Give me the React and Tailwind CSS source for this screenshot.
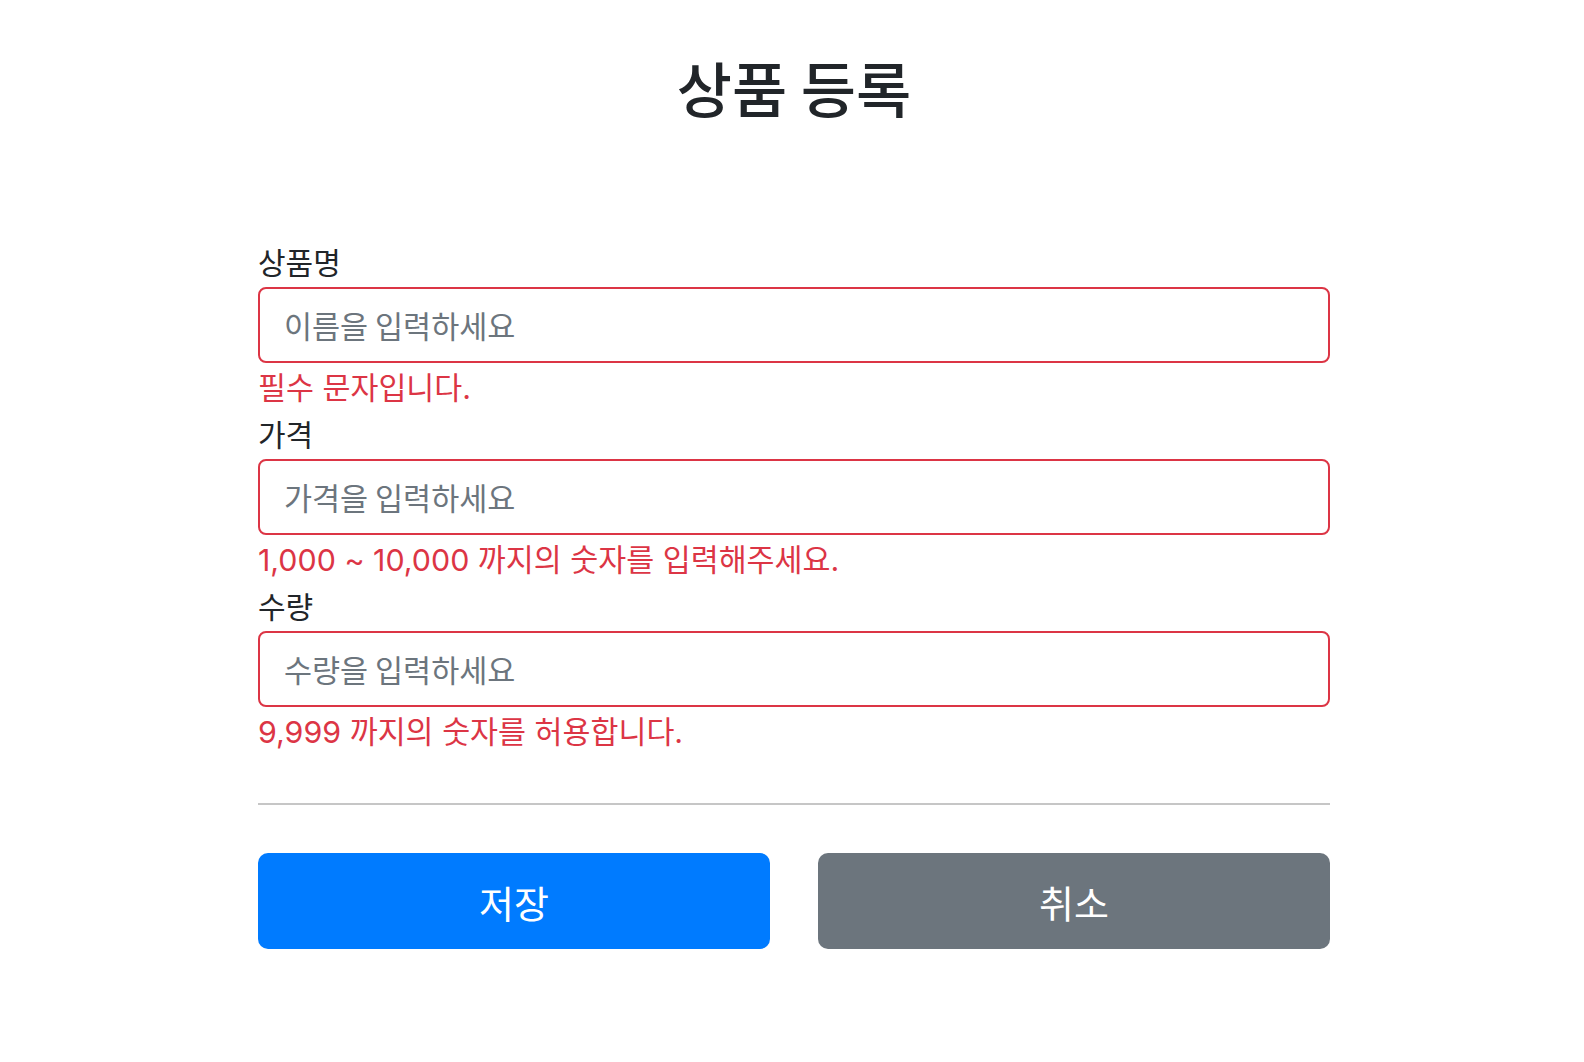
import { useState } from "react"

const fields = [
  { label: "상품명", placeholder: "이름을 입력하세요", error: "필수 문자입니다." },
  { label: "가격", placeholder: "가격을 입력하세요", error: "1,000 ~ 10,000 까지의 숫자를 입력해주세요." },
  { label: "수량", placeholder: "수량을 입력하세요", error: "9,999 까지의 숫자를 허용합니다." },
]

export default function App() {
  const [values, setValues] = useState({})

  return (
    <div className="min-h-screen bg-white pl-[4px] text-[#212529] font-['Noto_Sans_CJK_KR','Noto_Sans',sans-serif]">
      <div className="mx-auto w-[1072px] pt-[48px]">
        <h2 className="text-center text-[60px] leading-[77px] font-medium">상품 등록</h2>

        <form className="mt-[114px]" onSubmit={(e) => e.preventDefault()}>
          {fields.map((f, i) => (
            <div key={f.label}>
              <label className="block text-[30px] leading-[44px] pb-[4px]">{f.label}</label>
              <input
                type="text"
                value={values[i] || ""}
                onChange={(e) => setValues({ ...values, [i]: e.target.value })}
                placeholder={f.placeholder}
                className="block w-full h-[76px] px-[24px] border-2 border-[#dc3545] rounded-[8px] text-[30.5px] text-[#495057] placeholder-[#6c757d] outline-none"
              />
              <div className="mt-[5px] mb-[3px] font-['Inter','Noto_Sans_CJK_KR',sans-serif] text-[30.4px] leading-[40px] text-[#dc3545]">
                {f.error}
              </div>
            </div>
          ))}

          <hr className="mt-[51px] border-t-2 border-[#c6c6c6]" />

          {/* Buttons */}
          <div className="mt-[48px] grid grid-cols-2 gap-[48px]">
            <button type="submit" className="h-[96px] rounded-[10px] bg-[#007bff] text-white text-[38px]">
              저장
            </button>
            <button type="button" className="h-[96px] rounded-[10px] bg-[#6c757d] text-white text-[38px]">
              취소
            </button>
          </div>
        </form>
      </div>
    </div>
  )
}
